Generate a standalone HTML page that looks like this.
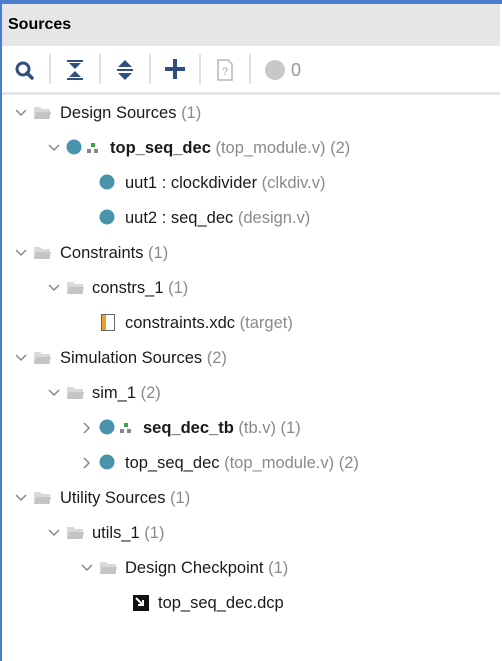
<!DOCTYPE html>
<html><head><meta charset="utf-8"><style>
*{margin:0;padding:0;box-sizing:border-box}
body{width:502px;height:661px;overflow:hidden;background:#fff;font-family:"Liberation Sans",sans-serif;position:relative}
.top{position:absolute;left:0;top:0;width:502px;height:4px;background:#4a7fcf}
.lb{position:absolute;left:0;top:0;width:2px;height:661px;background:#4a7fcf}
.hdr{position:absolute;left:2px;top:4px;width:498px;height:42px;background:#e6e6e6}
.hdr b{position:absolute;left:6px;top:12px;font-size:16px;color:#000}
.sep{position:absolute;left:2px;top:92px;width:498px;height:3px;background:#e6e6e6}
.vs{position:absolute;top:54px;width:2px;height:30px;background:#e0e0e0}
.row{position:absolute;height:24px;font-size:16.5px;line-height:24px;color:#1a1a1a;white-space:nowrap}
.g{color:#8a8a8a}
svg{position:absolute}
</style></head><body>
<div class="top"></div><div class="lb"></div>
<div class="hdr"><b>Sources</b></div>
<!-- toolbar -->
<svg style="left:14px;top:60px" width="22" height="22" viewBox="0 0 22 22"><circle cx="9" cy="9" r="6" fill="none" stroke="#2f4f7f" stroke-width="3"/><path d="M13 13l5 5" stroke="#2f4f7f" stroke-width="3.5" stroke-linecap="round"/></svg>
<div class="vs" style="left:49px"></div>
<svg style="left:66px;top:58px" width="18" height="24" viewBox="0 0 18 24"><path d="M1 2h16v2H1zM3 5h12L9 11zM3 19h12L9 13zM1 20h16v2H1z" fill="#2f4f7f"/></svg>
<div class="vs" style="left:99px"></div>
<svg style="left:116px;top:59px" width="18" height="22" viewBox="0 0 18 22"><path d="M9 1l7 7H2zM1 10h16v2H1zM2 14h14l-7 7z" fill="#2f4f7f"/></svg>
<div class="vs" style="left:149px"></div>
<svg style="left:164px;top:58px" width="22" height="22" viewBox="0 0 22 22"><path d="M9 1h4v20H9zM1 9h20v4H1z" fill="#2f4f7f"/></svg>
<div class="vs" style="left:199px"></div>
<svg style="left:217px;top:59px" width="16" height="22" viewBox="0 0 16 22"><path d="M1 1h10l4 4v16H1z" fill="none" stroke="#b5b5b5" stroke-width="1.5"/><text x="8" y="16" font-size="11" fill="#aaa" text-anchor="middle" font-family="Liberation Sans">?</text></svg>
<div class="vs" style="left:249px"></div>
<svg style="left:264px;top:59px" width="22" height="22"><circle cx="11" cy="11" r="10" fill="#c8c8c8"/></svg>
<div class="row" style="left:291px;top:58px;color:#999;font-size:18px">0</div>
<div class="sep"></div>

<!-- chevrons helpers inline -->
<svg style="left:14px;top:107px" width="14" height="12"><path d="M2 3l5 5 5-5" fill="none" stroke="#888" stroke-width="1.5"/></svg>
<svg style="left:33px;top:105px" width="18" height="15"><path d="M1 2h6l2 2h8v10H1z" fill="#d9d9d9"/><path d="M3 7h15l-2 7H1z" fill="#c4c4c4"/></svg>
<div class="row" style="left:60px;top:101px">Design Sources <span class="g">(1)</span></div>

<svg style="left:47px;top:142px" width="14" height="12"><path d="M2 3l5 5 5-5" fill="none" stroke="#888" stroke-width="1.5"/></svg>
<svg style="left:66px;top:139px" width="18" height="18"><circle cx="8" cy="8" r="7.5" fill="#4a93ad"/></svg>
<svg style="left:86px;top:141px" width="16" height="14"><rect x="5" y="2" width="4" height="4" fill="#3aa54a"/><rect x="1" y="8" width="4" height="4" fill="#888"/><rect x="8" y="8" width="4" height="4" fill="#888"/></svg>
<div class="row" style="left:110px;top:136px"><b>top_seq_dec</b> <span class="g">(top_module.v) (2)</span></div>

<svg style="left:99px;top:174px" width="18" height="18"><circle cx="8" cy="8" r="7.5" fill="#4a93ad"/></svg>
<div class="row" style="left:125px;top:171px">uut1 : clockdivider <span class="g">(clkdiv.v)</span></div>
<svg style="left:99px;top:209px" width="18" height="18"><circle cx="8" cy="8" r="7.5" fill="#4a93ad"/></svg>
<div class="row" style="left:125px;top:206px">uut2 : seq_dec <span class="g">(design.v)</span></div>

<svg style="left:14px;top:247px" width="14" height="12"><path d="M2 3l5 5 5-5" fill="none" stroke="#888" stroke-width="1.5"/></svg>
<svg style="left:33px;top:245px" width="18" height="15"><path d="M1 2h6l2 2h8v10H1z" fill="#d9d9d9"/><path d="M3 7h15l-2 7H1z" fill="#c4c4c4"/></svg>
<div class="row" style="left:60px;top:241px">Constraints <span class="g">(1)</span></div>

<svg style="left:47px;top:282px" width="14" height="12"><path d="M2 3l5 5 5-5" fill="none" stroke="#888" stroke-width="1.5"/></svg>
<svg style="left:66px;top:280px" width="18" height="15"><path d="M1 2h6l2 2h8v10H1z" fill="#d9d9d9"/><path d="M3 7h15l-2 7H1z" fill="#c4c4c4"/></svg>
<div class="row" style="left:92px;top:276px">constrs_1 <span class="g">(1)</span></div>

<svg style="left:101px;top:314px" width="16" height="18"><rect x="0.5" y="0.5" width="13" height="16" fill="#fff" stroke="#666"/><rect x="1" y="1" width="4" height="15" fill="#e8a030"/></svg>
<div class="row" style="left:125px;top:311px">constraints.xdc <span class="g">(target)</span></div>

<svg style="left:14px;top:352px" width="14" height="12"><path d="M2 3l5 5 5-5" fill="none" stroke="#888" stroke-width="1.5"/></svg>
<svg style="left:33px;top:350px" width="18" height="15"><path d="M1 2h6l2 2h8v10H1z" fill="#d9d9d9"/><path d="M3 7h15l-2 7H1z" fill="#c4c4c4"/></svg>
<div class="row" style="left:60px;top:346px">Simulation Sources <span class="g">(2)</span></div>

<svg style="left:47px;top:387px" width="14" height="12"><path d="M2 3l5 5 5-5" fill="none" stroke="#888" stroke-width="1.5"/></svg>
<svg style="left:66px;top:385px" width="18" height="15"><path d="M1 2h6l2 2h8v10H1z" fill="#d9d9d9"/><path d="M3 7h15l-2 7H1z" fill="#c4c4c4"/></svg>
<div class="row" style="left:92px;top:381px">sim_1 <span class="g">(2)</span></div>

<svg style="left:81px;top:421px" width="12" height="14"><path d="M3 2l5 5-5 5" fill="none" stroke="#888" stroke-width="1.5"/></svg>
<svg style="left:99px;top:419px" width="18" height="18"><circle cx="8" cy="8" r="7.5" fill="#4a93ad"/></svg>
<svg style="left:119px;top:421px" width="16" height="14"><rect x="5" y="2" width="4" height="4" fill="#3aa54a"/><rect x="1" y="8" width="4" height="4" fill="#888"/><rect x="8" y="8" width="4" height="4" fill="#888"/></svg>
<div class="row" style="left:143px;top:416px"><b>seq_dec_tb</b> <span class="g">(tb.v) (1)</span></div>

<svg style="left:81px;top:456px" width="12" height="14"><path d="M3 2l5 5-5 5" fill="none" stroke="#888" stroke-width="1.5"/></svg>
<svg style="left:99px;top:454px" width="18" height="18"><circle cx="8" cy="8" r="7.5" fill="#4a93ad"/></svg>
<div class="row" style="left:125px;top:451px">top_seq_dec <span class="g">(top_module.v) (2)</span></div>

<svg style="left:14px;top:492px" width="14" height="12"><path d="M2 3l5 5 5-5" fill="none" stroke="#888" stroke-width="1.5"/></svg>
<svg style="left:33px;top:490px" width="18" height="15"><path d="M1 2h6l2 2h8v10H1z" fill="#d9d9d9"/><path d="M3 7h15l-2 7H1z" fill="#c4c4c4"/></svg>
<div class="row" style="left:60px;top:486px">Utility Sources <span class="g">(1)</span></div>

<svg style="left:47px;top:527px" width="14" height="12"><path d="M2 3l5 5 5-5" fill="none" stroke="#888" stroke-width="1.5"/></svg>
<svg style="left:66px;top:525px" width="18" height="15"><path d="M1 2h6l2 2h8v10H1z" fill="#d9d9d9"/><path d="M3 7h15l-2 7H1z" fill="#c4c4c4"/></svg>
<div class="row" style="left:92px;top:521px">utils_1 <span class="g">(1)</span></div>

<svg style="left:80px;top:562px" width="14" height="12"><path d="M2 3l5 5 5-5" fill="none" stroke="#888" stroke-width="1.5"/></svg>
<svg style="left:99px;top:560px" width="18" height="15"><path d="M1 2h6l2 2h8v10H1z" fill="#d9d9d9"/><path d="M3 7h15l-2 7H1z" fill="#c4c4c4"/></svg>
<div class="row" style="left:125px;top:556px">Design Checkpoint <span class="g">(1)</span></div>

<svg style="left:133px;top:595px" width="16" height="16"><rect x="0" y="0" width="16" height="16" fill="#111"/><path d="M3 3l7 7M10 5v5H5" fill="none" stroke="#fff" stroke-width="2"/></svg>
<div class="row" style="left:158px;top:591px">top_seq_dec.dcp</div>
</body></html>
